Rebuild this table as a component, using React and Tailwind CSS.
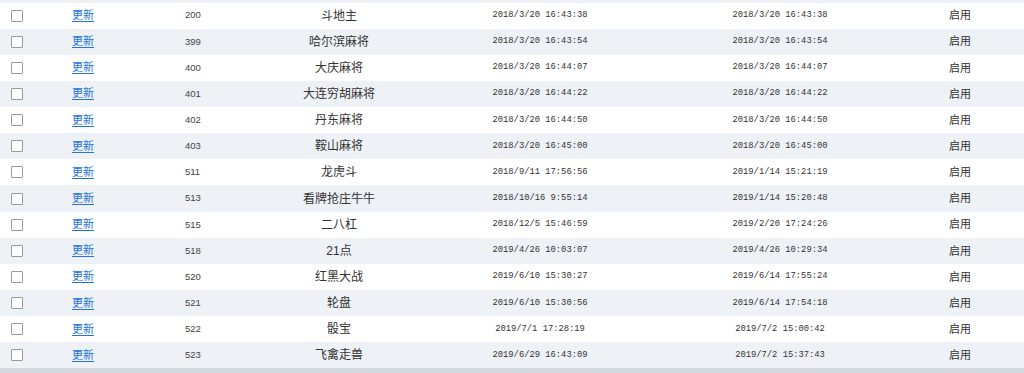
const rows = [
  ["200", "斗地主", "2018/3/20 16:43:38", "2018/3/20 16:43:38"],
  ["399", "哈尔滨麻将", "2018/3/20 16:43:54", "2018/3/20 16:43:54"],
  ["400", "大庆麻将", "2018/3/20 16:44:07", "2018/3/20 16:44:07"],
  ["401", "大连穷胡麻将", "2018/3/20 16:44:22", "2018/3/20 16:44:22"],
  ["402", "丹东麻将", "2018/3/20 16:44:50", "2018/3/20 16:44:50"],
  ["403", "鞍山麻将", "2018/3/20 16:45:00", "2018/3/20 16:45:00"],
  ["511", "龙虎斗", "2018/9/11 17:56:56", "2019/1/14 15:21:19"],
  ["513", "看牌抢庄牛牛", "2018/10/16 9:55:14", "2019/1/14 15:20:48"],
  ["515", "二八杠", "2018/12/5 15:46:59", "2019/2/20 17:24:26"],
  ["518", "21点", "2019/4/26 10:03:07", "2019/4/26 10:29:34"],
  ["520", "红黑大战", "2019/6/10 15:30:27", "2019/6/14 17:55:24"],
  ["521", "轮盘", "2019/6/10 15:30:56", "2019/6/14 17:54:18"],
  ["522", "骰宝", "2019/7/1 17:28:19", "2019/7/2 15:00:42"],
  ["523", "飞禽走兽", "2019/6/29 16:43:09", "2019/7/2 15:37:43"],
];

const App = () => {
  return (
    <div className="w-[1024px] h-[373px] flex flex-col bg-[#d3d9df] font-['Liberation_Sans','Noto_Sans_CJK_SC',sans-serif] text-[#333]">
      <div className="h-[2.5px] bg-[#eef1f6]" />
      {rows.map((row, i) => (
        <div
          key={row[0]}
          className={`h-[26.15px] grid grid-cols-[34px_98px_106px_202px_200px_280px_80px_1fr] items-center ${
            i % 2 === 0 ? "bg-white" : "bg-[#eef1f6]"
          }`}
        >
          <div className="flex justify-center">
            <span className="size-[12px] border border-[#9a9a9a] rounded-[1px] bg-white" />
          </div>
          <div className="flex justify-center">
            <a
              href="#"
              className="text-[11px] leading-none text-[#2474e0] underline underline-offset-2"
            >
              更新
            </a>
          </div>
          <div className="pl-[53px] text-[9.5px] text-[#444]">{row[0]}</div>
          <div className="text-center text-[12px]">{row[1]}</div>
          <div className="text-center font-['Liberation_Mono',monospace] text-[8.8px] text-[#333]">
            {row[2]}
          </div>
          <div className="text-center font-['Liberation_Mono',monospace] text-[8.8px] text-[#333]">
            {row[3]}
          </div>
          <div className="text-center text-[11px]">启用</div>
          <div />
        </div>
      ))}
    </div>
  );
};

export default App;
